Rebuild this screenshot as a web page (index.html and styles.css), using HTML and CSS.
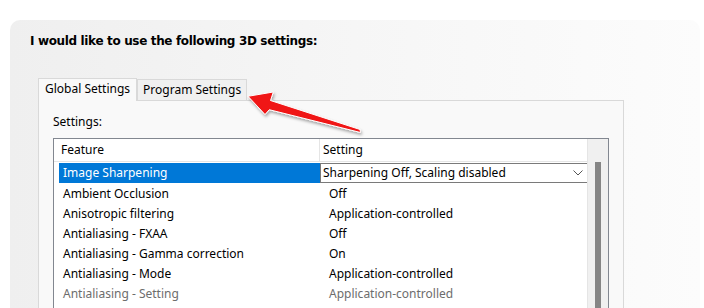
FILE: index.html
```html
<!DOCTYPE html>
<html lang="en">

    <head>
        <meta charset="UTF-8">
        <title>3D Settings</title>
        <link rel="stylesheet" href="styles.css">
    </head>

    <body>
        <div class="panel">
            <h1 class="title">I would like to use the following 3D settings:</h1>
            <div class="tabs">
                <span class="tab active">Global Settings</span>
                <span class="tab">Program Settings</span>
            </div>
            <div class="tabpanel">
                <p class="label">Settings:</p>
                <div class="list">
                    <div class="rows">
                        <div class="head">
                            <span class="col1">Feature</span>
                            <span class="col2">Setting</span>
                        </div>
                        <div class="row selected">
                            <span class="col1">Image Sharpening</span>
                            <span class="col2 combo">Sharpening Off, Scaling disabled
                                <svg class="chev" width="10" height="6" viewBox="0 0 10 6"><path d="M0.5 0.5 L5 5 L9.5 0.5" fill="none" stroke="#555" stroke-width="1"/></svg>
                            </span>
                        </div>
                        <div class="row"><span class="col1">Ambient Occlusion</span><span class="col2">Off</span></div>
                        <div class="row"><span class="col1">Anisotropic filtering</span><span class="col2">Application-controlled</span></div>
                        <div class="row"><span class="col1">Antialiasing - FXAA</span><span class="col2">Off</span></div>
                        <div class="row"><span class="col1">Antialiasing - Gamma correction</span><span class="col2">On</span></div>
                        <div class="row"><span class="col1">Antialiasing - Mode</span><span class="col2">Application-controlled</span></div>
                        <div class="row dim"><span class="col1">Antialiasing - Setting</span><span class="col2">Application-controlled</span></div>
                    </div>
                    <div class="scroll"><div class="thumb"></div></div>
                </div>
            </div>
        </div>

        <!-- callout arrow pointing at the Program Settings tab -->
        <svg class="arrow" width="130" height="60" viewBox="0 0 130 60">
            <defs>
                <filter id="sh" x="-20%" y="-40%" width="140%" height="180%">
                    <feDropShadow dx="1" dy="2" stdDeviation="1.5" flood-color="#000" flood-opacity="0.35"/>
                </filter>
            </defs>
            <path filter="url(#sh)" d="M8 18.3 L33.3 14 L30.5 22.5 L120 51.5 L120.5 54.5 L29.3 31.7 L25 36.5 Z" fill="#f01515" stroke="#fff" stroke-width="1" stroke-linejoin="round"/>
        </svg>
    </body>

</html>
```
FILE: styles.css
```css
* {
    padding: 0;
    margin: 0;
    box-sizing: border-box;
}

body {
    background: #fff;
    font-family: "Noto Sans", "Open Sans", sans-serif;
    font-size: 12px;
    color: #000;
    overflow: hidden;
}

.panel {
    margin: 20px 4px 0 10px;
    height: 288px;
    border-radius: 10px 10px 0 0;
    background: linear-gradient(to right, #efefef, #f6f6f6 50%, #fcfcfc);
    padding: 12px 0 0 20px;
    overflow: hidden;
}

.title {
    font-family: "DejaVu Sans", sans-serif;
    font-size: 12px;
    font-weight: bold;
    letter-spacing: -0.35px;
    height: 45px;
    line-height: 19px;
}

.tabs {
    display: flex;
    align-items: flex-end;
    margin-left: 8px;
    height: 23px;
}

.tab {
    height: 21px;
    line-height: 19px;
    padding: 0 5px;
    border: 1px solid #d9d9d9;
    border-bottom: none;
    background: #f0f0f0;
}

.tab.active {
    height: 23px;
    padding: 0 6px;
    background: #f9f9f9;
    margin-bottom: -1px;
    position: relative;
}

.tabpanel {
    margin-left: 8px;
    width: 586px;
    height: 210px;
    background: #f9f9f9;
    border: 1px solid #d9d9d9;
    padding: 12px 14px 0 14px;
}

.label {
    height: 25px;
    line-height: 18px;
}

.list {
    display: flex;
    width: 556px;
    height: 175px;
    background: #fff;
    border: 1px solid #828790;
    border-bottom: none;
}

.rows {
    flex: 1;
}

.head {
    display: flex;
    height: 23px;
    line-height: 21px;
    border-bottom: 1px solid #e5e5e5;
}

.head .col1 {
    width: 266px;
    padding-left: 7px;
    border-right: 1px solid #e5e5e5;
}

.head .col2 {
    padding-left: 3px;
}

.row {
    display: flex;
    height: 20px;
    line-height: 20px;
}

.row .col1 {
    width: 261px;
    margin-left: 5px;
    padding-left: 4px;
}

.row .col2 {
    flex: 1;
    padding-left: 9px;
}

.row.selected {
    margin-top: 1px;
    margin-bottom: 1px;
}

.row.selected .col1 {
    background: #0078d7;
    color: #fff;
}

.row.selected .col2.combo {
    display: flex;
    align-items: center;
    padding-left: 2px;
    border-top: 1px solid #7a7a7a;
    border-bottom: 1px solid #7a7a7a;
    border-left: 1px solid #7a7a7a;
    line-height: 18px;
}

.chev {
    margin-left: auto;
    margin-right: 4px;
}

.row.dim {
    color: #6d6d6d;
}

.scroll {
    width: 21px;
    background: #f0f0f0;
    border-left: 1px solid #e5e5e5;
    padding: 23px 0 0 7px;
}

.thumb {
    width: 6px;
    height: 160px;
    background: #858585;
}

.arrow {
    position: absolute;
    left: 240px;
    top: 78px;
}
```
